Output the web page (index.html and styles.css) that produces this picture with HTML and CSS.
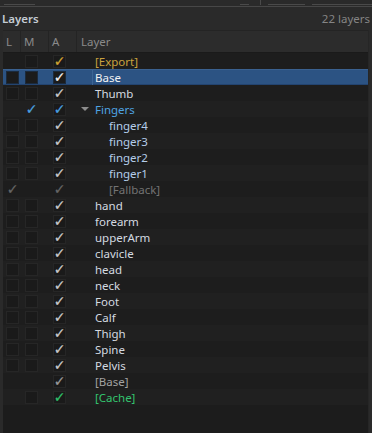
FILE: index.html
```html
<!DOCTYPE html>
<html>
<head>
<meta charset="utf-8">
<link rel="stylesheet" href="styles.css">
</head>
<body>
<div class="strip">
  <span class="seg s1"></span>
  <span class="seg s2"></span>
  <span class="tick"></span>
  <span class="seg s3"></span>
  <span class="seg s4"></span>
</div>
<div class="titlebar">
  <span class="title">Layers</span>
  <span class="count">22 layers</span>
</div>
<div class="panel">
  <div class="hdr">
    <div class="hc">L</div>
    <div class="hc">M</div>
    <div class="hc">A</div>
    <div class="hc hl">Layer</div>
  </div>
  <div class="list">
    <div class="row"><div class="c"></div><div class="c"><span class="box"></span></div><div class="c"><span class="box"><span class="ck gold">✓</span></span></div><div class="name gold">[Export]</div></div>
    <div class="row sel"><div class="c"><span class="box dk"></span></div><div class="c"><span class="box dk"></span></div><div class="c"><span class="box dk"><span class="ck w">✓</span></span></div><div class="name w"><span class="selname">Base</span></div></div>
    <div class="row"><div class="c"><span class="box"></span></div><div class="c"><span class="box"></span></div><div class="c"><span class="box"><span class="ck">✓</span></span></div><div class="name">Thumb</div></div>
    <div class="row"><div class="c"></div><div class="c"><span class="box nb"><span class="ck blue">✓</span></span></div><div class="c"><span class="box"><span class="ck blue">✓</span></span></div><div class="name blue"><span class="tri"></span>Fingers</div></div>
    <div class="row"><div class="c"><span class="box"></span></div><div class="c"><span class="box"></span></div><div class="c"><span class="box"><span class="ck">✓</span></span></div><div class="name sub">finger4</div></div>
    <div class="row"><div class="c"><span class="box"></span></div><div class="c"><span class="box"></span></div><div class="c"><span class="box"><span class="ck">✓</span></span></div><div class="name sub">finger3</div></div>
    <div class="row"><div class="c"><span class="box"></span></div><div class="c"><span class="box"></span></div><div class="c"><span class="box"><span class="ck">✓</span></span></div><div class="name sub">finger2</div></div>
    <div class="row"><div class="c"><span class="box"></span></div><div class="c"><span class="box"></span></div><div class="c"><span class="box"><span class="ck">✓</span></span></div><div class="name sub">finger1</div></div>
    <div class="row"><div class="c"><span class="box nb"><span class="ck dim">✓</span></span></div><div class="c"></div><div class="c"><span class="box nb"><span class="ck dim">✓</span></span></div><div class="name sub dim">[Fallback]</div></div>
    <div class="row"><div class="c"><span class="box"></span></div><div class="c"><span class="box"></span></div><div class="c"><span class="box"><span class="ck">✓</span></span></div><div class="name">hand</div></div>
    <div class="row"><div class="c"><span class="box"></span></div><div class="c"><span class="box"></span></div><div class="c"><span class="box"><span class="ck">✓</span></span></div><div class="name">forearm</div></div>
    <div class="row"><div class="c"><span class="box"></span></div><div class="c"><span class="box"></span></div><div class="c"><span class="box"><span class="ck">✓</span></span></div><div class="name">upperArm</div></div>
    <div class="row"><div class="c"><span class="box"></span></div><div class="c"><span class="box"></span></div><div class="c"><span class="box"><span class="ck">✓</span></span></div><div class="name">clavicle</div></div>
    <div class="row"><div class="c"><span class="box"></span></div><div class="c"><span class="box"></span></div><div class="c"><span class="box"><span class="ck">✓</span></span></div><div class="name">head</div></div>
    <div class="row"><div class="c"><span class="box"></span></div><div class="c"><span class="box"></span></div><div class="c"><span class="box"><span class="ck">✓</span></span></div><div class="name">neck</div></div>
    <div class="row"><div class="c"><span class="box"></span></div><div class="c"><span class="box"></span></div><div class="c"><span class="box"><span class="ck">✓</span></span></div><div class="name">Foot</div></div>
    <div class="row"><div class="c"><span class="box"></span></div><div class="c"><span class="box"></span></div><div class="c"><span class="box"><span class="ck">✓</span></span></div><div class="name">Calf</div></div>
    <div class="row"><div class="c"><span class="box"></span></div><div class="c"><span class="box"></span></div><div class="c"><span class="box"><span class="ck">✓</span></span></div><div class="name">Thigh</div></div>
    <div class="row"><div class="c"><span class="box"></span></div><div class="c"><span class="box"></span></div><div class="c"><span class="box"><span class="ck">✓</span></span></div><div class="name">Spine</div></div>
    <div class="row"><div class="c"><span class="box"></span></div><div class="c"><span class="box"></span></div><div class="c"><span class="box"><span class="ck">✓</span></span></div><div class="name">Pelvis</div></div>
    <div class="row"><div class="c"></div><div class="c"></div><div class="c"><span class="box"><span class="ck grey">✓</span></span></div><div class="name grey">[Base]</div></div>
    <div class="row"><div class="c"></div><div class="c"><span class="box"></span></div><div class="c"><span class="box"><span class="ck green">✓</span></span></div><div class="name green">[Cache]</div></div>
  </div>
</div>
</body>
</html>
```
FILE: styles.css
```css
html, body {
  margin: 0;
  padding: 0;
}
body {
  width: 372px;
  height: 433px;
  overflow: hidden;
  background: #2a2a2a;
  font-family: "Noto Sans", "Open Sans", sans-serif;
  font-size: 11.5px;
  display: flex;
  flex-direction: column;
}
.strip {
  position: relative;
  height: 7px;
  border-bottom: 1px solid #474747;
  box-sizing: border-box;
  flex: none;
}
.seg {
  position: absolute;
  top: 4px;
  height: 1px;
  background: #4a4a4a;
}
.s1 { left: 4px; width: 31px; }
.s2 { left: 240px; width: 9px; }
.s3 { left: 268px; width: 37px; }
.s4 { left: 312px; width: 60px; }
.tick {
  position: absolute;
  left: 260px;
  top: 0;
  width: 1px;
  height: 5px;
  background: #4a4a4a;
}
.titlebar {
  height: 23px;
  flex: none;
  display: flex;
  align-items: center;
  justify-content: space-between;
  padding: 0 2px 1px 2px;
  box-sizing: border-box;
}
.title {
  color: #c4ccd4;
  font-weight: 600;
}
.count {
  color: #858585;
}
.panel {
  flex: 1;
  margin: 0 3px 0 3px;
  background: #1c1c1c;
  display: flex;
  flex-direction: column;
  border-right: 1px solid #262626;
}
.hdr {
  display: grid;
  grid-template-columns: 18px 28px 28px 1fr;
  height: 21px;
  background: #2c2c2c;
  border-top: 1px solid #242424;
  border-bottom: 1px solid #1a1a1a;
  flex: none;
}
.hc {
  color: #8a8a8a;
  display: flex;
  align-items: center;
  padding-left: 3px;
  border-right: 1px solid #242424;
}
.hc.hl {
  padding-left: 4px;
  border-right: none;
}
.row {
  display: grid;
  grid-template-columns: 18px 28px 28px 1fr;
  height: 16px;
  background: #1d1d1d;
}
.row:nth-child(even) {
  background: #202020;
}
.row.sel {
  background: #2c5383;
  box-shadow: inset 0 1px 0 #3a6190, inset 0 -1px 0 #234470;
}
.c {
  display: flex;
  align-items: center;
  padding-left: 3px;
}
.c + .c {
  padding-left: 4px;
}
.box {
  width: 13px;
  height: 13px;
  box-sizing: border-box;
  background: #1a1a1a;
  border: 1px solid #262626;
  display: flex;
  align-items: center;
  justify-content: center;
}
.box.dk {
  background: #1b1b1b;
  border-color: #1b2a3c;
}
.box.nb {
  background: transparent;
  border-color: transparent;
}
.ck {
  font-family: "DejaVu Sans", sans-serif;
  font-size: 14px;
  line-height: 1;
  color: #cacaca;
  -webkit-text-stroke: 0.25px currentColor;
}
.ck.w { color: #f4f4f4; }
.ck.gold { color: #d2a532; }
.ck.blue { color: #4aa0e0; }
.ck.dim { color: #666; }
.ck.grey { color: #9a9a9a; }
.ck.green { color: #2fc06a; }
.name {
  display: flex;
  align-items: center;
  padding-left: 18px;
  color: #d4dae0;
  white-space: nowrap;
}
.name.sub { padding-left: 32px; color: #b4cdea; }
.name.gold { color: #c9a23e; }
.name.w { color: #f2f2f2; }
.name.blue { color: #4ea3e2; padding-left: 4px; }
.name.dim { color: #737373; }
.name.grey { color: #a2a2a2; }
.name.green { color: #33c46e; }
.selname {
  margin-left: -3px;
  padding-left: 2px;
  border-left: 1px solid #3c6594;
  line-height: 15px;
}
.tri {
  width: 0;
  height: 0;
  border-left: 4px solid transparent;
  border-right: 4px solid transparent;
  border-top: 4px solid #8c8c8c;
  margin-right: 6px;
}
```
